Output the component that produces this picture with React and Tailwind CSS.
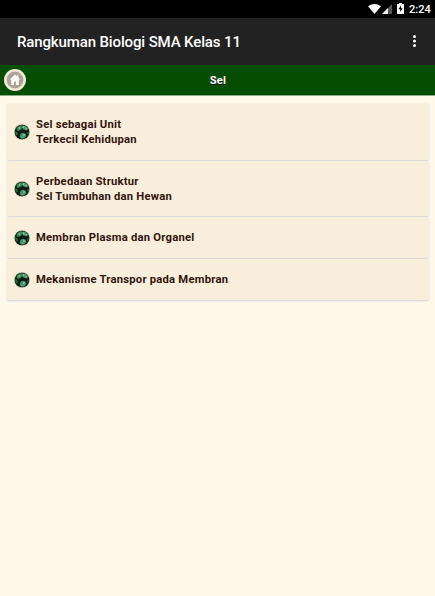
const items = [
  { lines: ['Sel sebagai Unit', 'Terkecil Kehidupan'], size: 'h-[57px]' },
  { lines: ['Perbedaan Struktur', 'Sel Tumbuhan dan Hewan'], size: 'h-14' },
  { lines: ['Membran Plasma dan Organel'], size: 'h-[42px]' },
  { lines: ['Mekanisme Transpor pada Membran'], size: 'h-[42px]' },
];

function CellIcon() {
  return (
    <svg className="size-4 shrink-0" viewBox="0 0 16 16">
      <circle cx="8" cy="8" r="8" fill="#c4c0a6" />
      <circle cx="8" cy="8" r="7.3" fill="#0b1c12" />
      <path d="M3.6 3 6 1.2 9 1.6 8.4 4 6.4 6.2 3.4 7 2.4 5z" fill="#3f8459" />
      <path d="M9 1.4 12 2.2 14 4.6 13 6.4 10.6 5.8 8.6 5.2z" fill="#4d9a6a" />
      <path d="M1.2 7 3 8 4 10 3 11.6 1.6 10z" fill="#2c6c43" />
      <path d="M5.8 12.4 6.6 9.8 8.8 8.8 11.4 9.6 12.4 12 10 14.6 7 14.6z" fill="#47946a" />
      <path d="M13 8.6 14.8 8 14 11.6z" fill="#2c7047" />
      <circle cx="9.3" cy="3.2" r="0.9" fill="#8ccaa0" />
      <circle cx="5.4" cy="4" r="0.9" fill="#7cc096" />
      <circle cx="12" cy="4.8" r="0.7" fill="#8ccaa0" />
      <circle cx="10" cy="11" r="0.9" fill="#8ccaa0" />
      <circle cx="8" cy="13.2" r="0.7" fill="#7cc096" />
    </svg>
  );
}

function StatusBar() {
  return (
    <div className="flex h-[18px] items-center justify-end bg-black pr-[5px] text-[11px] font-medium text-white">
      <svg className="h-[10px] w-[13px]" viewBox="0 0 13 10">
        <path d="M0 2.2Q6.5-2.2 13 2.2L6.5 10z" fill="#fff" />
      </svg>
      <svg className="ml-px h-[10px] w-[10px]" viewBox="0 0 10 10">
        <path d="M10 0v10H0z" fill="#555" />
        <path d="M6 4v6H0z" fill="#fff" />
      </svg>
      <svg className="mr-px mb-px ml-[5px] h-[11px] w-[7px]" viewBox="0 0 7 11">
        <path d="M2 0h3v1h2v10H0V1h2z" fill="#fff" />
        <path d="M4 2.5 1.4 6.2h1.8V9L5.7 5.2H4z" fill="#000" />
      </svg>
      <span className="ml-1 w-[21px] pt-0.5 whitespace-nowrap">2:24</span>
    </div>
  );
}

export default function App() {
  return (
    <div className="h-[596px] w-[435px] overflow-hidden bg-[#fff8eb] font-['Roboto',sans-serif]">
      <StatusBar />
      <header className="flex h-[47px] items-center justify-between bg-[#222222] pr-[18px] pl-[17px] text-white">
        <h1 className="pt-0.5 text-[15px] font-medium tracking-[-0.13px]">
          Rangkuman Biologi SMA Kelas 11
        </h1>
        <svg className="mb-px h-3 w-[5px]" viewBox="0 0 5 12" fill="#fff">
          <circle cx="2.5" cy="1.5" r="1.5" />
          <circle cx="2.5" cy="6" r="1.5" />
          <circle cx="2.5" cy="10.5" r="1.5" />
        </svg>
      </header>
      <nav className="grid h-[31px] grid-cols-[1fr_auto_1fr] items-center border-b border-[#8aab86] bg-[#054d00] px-[3px] text-white">
        <svg className="mb-px ml-px size-[22px]" viewBox="0 0 22 22">
          <circle cx="11" cy="11" r="11" fill="#f3ead7" />
          <circle cx="11" cy="11" r="8.4" fill="#aea398" />
          <path d="M11 5.6 5.7 10.8h1.5V16H10v-3.6h2V16h2.8v-5.2h1.5L14.4 9V6.2h-1.3v1.4z" fill="#fff" />
        </svg>
        <h2 className="pt-0.5 pl-px text-[11.25px] font-bold tracking-[0.2px] [text-shadow:0_1px_0_#111]">Sel</h2>
      </nav>
      <ul className="mr-1.5 ml-[7px] pt-2">
        {items.map((item) => (
          <li
            key={item.lines[0]}
            className={`flex items-center gap-1.5 rounded-[3px] border-b-[1.5px] border-[#dcdadb] bg-[#f8eedb] pl-[7px] shadow-[0_0_2px_#ded9d0] ${item.size}`}
          >
            <CellIcon />
            <div className="text-[11.25px] leading-[15px] font-bold tracking-[0.22px] text-[#32150d]">
              {item.lines.map((line) => (
                <p key={line}>{line}</p>
              ))}
            </div>
          </li>
        ))}
      </ul>
    </div>
  );
}
